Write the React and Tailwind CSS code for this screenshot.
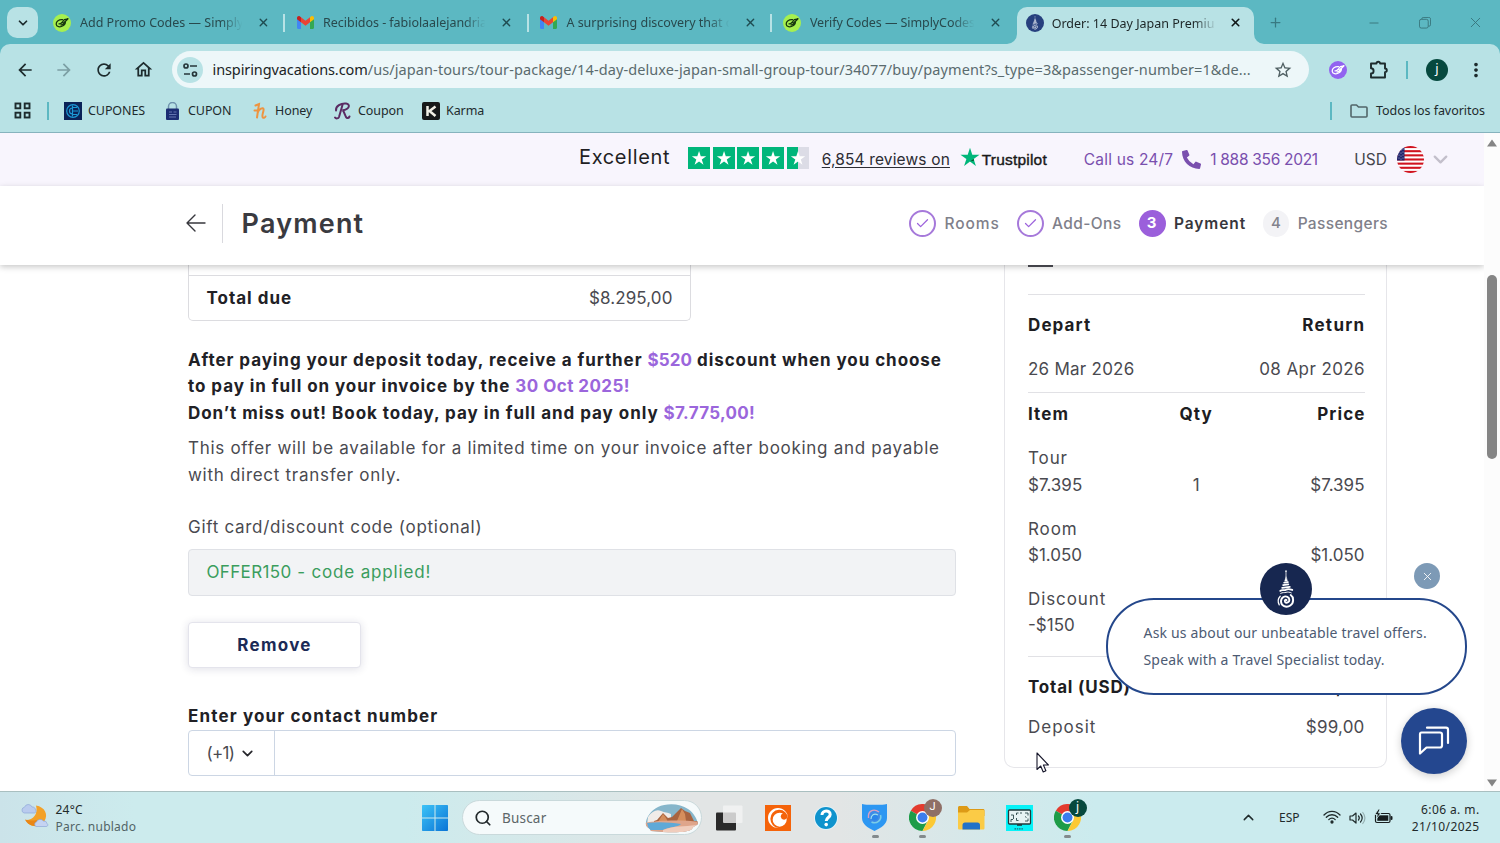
import React from 'react';
import { Check, ChevronDown, ChevronUp, Minus, Plus, Search, X } from 'lucide-react';
import {
  MdArrowBack,
  MdArrowForward,
  MdMoreVert,
  MdOutlineHome,
  MdRefresh,
  MdStarBorder,
} from 'react-icons/md';
import { FaPhoneAlt } from 'react-icons/fa';
import { SiCrunchyroll } from 'react-icons/si';

const STAR = 'M12 2l2.4 7.3H22l-6.2 4.5 2.4 7.3L12 16.6l-6.2 4.5 2.4-7.3L2 9.3h7.6z';

/* ---------- Favicons and logos ---------- */

const SimplyIcon = ({ bg, fg }) => (
  <svg width="18" height="18" viewBox="0 0 18 18" className="shrink-0">
    <circle cx="9" cy="9" r="9" fill={bg} />
    <g fill="none" stroke={fg} strokeWidth="1.3" strokeLinecap="round" strokeLinejoin="round">
      <path d="M9.500 5.600C6 5.200 3 7.600 3.200 10.200c.2 2.600 4 3.400 6.800 1.600 2-1.300 2.600-3 2.200-4.300" />
      <path d="M6 9.800c1.600.2 2.600-.6 3.200-1.600l1.300 1.100 4.500-4.500-3.700.9-1.600 2" />
      <path d="M8 11c1.500 0 2.600-.6 3.300-1.700" />
    </g>
  </svg>
);

const GmailIcon = () => (
  <svg width="17" height="13" viewBox="0 0 17 13" className="shrink-0">
    <path d="M0 2.500v9.300C0 12.500.5 13 1.200 13H4V6z" fill="#4285f4" />
    <path d="M17 2.500v9.300c0 .7-.5 1.200-1.200 1.200H13V6z" fill="#34a853" />
    <path d="M13 1.300v5L17 3.200V2c0-1.700-1.800-2.500-3-1.500z" fill="#fbbc04" />
    <path d="M4 6.200V1.300l4.500 3.500L13 1.300v4.900L8.500 9.700z" fill="#ea4335" />
    <path d="M0 2v1.200l4 3.100V1.300L3 .5C1.800-.5 0 .3 0 2z" fill="#c5221f" />
  </svg>
);

const TempleIcon = ({ size, bg }) => (
  <svg width={size} height={size} viewBox="0 0 54 54" className="shrink-0">
    <circle cx="27" cy="27" r="27" fill={bg} />
    <g fill="none" stroke="#fff" strokeLinecap="round">
      <path d="M27 8v10" strokeWidth=".8" />
      <circle cx="27" cy="8.500" r=".8" fill="#fff" stroke="none" />
      <path d="M27 14.500l-1.500 4.500h3z" fill="#fff" strokeWidth=".4" />
      <path d="M25 20.500l4-.6M24 23l5.500-.8M23 25.800l8-1" strokeWidth="1.700" />
      <path d="M21 29c2-2 4 0 6-1.300s4-.7 6.500.3" strokeWidth="1.900" />
      <path d="M21.500 31.500c2-1.200 4-.5 5.500-1s4-.3 5.500.500" strokeWidth="1" />
      <path d="M27.500 38.500c-1-.8-2.300.6-1.500 1.800 1.400 1.900 4.500.6 4.500-2 0-3-3.600-4.600-6.200-3-3.600 2.300-3.200 7.800.7 9.500 4.600 1.900 9.400-1.600 9.400-6.500 0-2.300-1-4-2.500-5" strokeWidth="2" />
      <path d="M20 43.500c-1.600-3-1.400-6.500 1-9" strokeWidth="1.300" />
    </g>
  </svg>
);

const ChromeLogo = () => (
  <svg width="27" height="27" viewBox="0 0 48 48" className="shrink-0">
    <path d="M24 24L3.200 12A24 24 0 0 1 44.800 12z" fill="#e33b2e" />
    <path d="M24 24L3.200 12A24 24 0 0 0 24 48l9-18z" fill="#1e9c48" />
    <path d="M24 24l20.800-12A24 24 0 0 1 24 48l9.500-18z" fill="#fcc934" />
    <path d="M24 12h20.800L34 20z" fill="#e33b2e" />
    <circle cx="24" cy="24" r="11.500" fill="#fff" />
    <circle cx="24" cy="24" r="8.800" fill="#3b7ded" />
  </svg>
);

const FlagUS = () => (
  <svg width="27" height="27" viewBox="0 0 27 27" className="shrink-0">
    <defs>
      <clipPath id="flag"><circle cx="13.500" cy="13.500" r="13.500" /></clipPath>
    </defs>
    <g clipPath="url(#flag)">
      <rect width="27" height="27" fill="#fff" />
      {[0, 4.15, 8.3, 12.45, 16.6, 20.75, 24.9].map((y) => (
        <rect key={y} y={y} width="27" height="2.080" fill="#d0131f" />
      ))}
      <rect width="7.500" height="14.500" fill="#22256c" />
      <g fill="#c9cbe4">
        {[3, 6, 9, 12].map((y) => (
          <g key={y}>
            <circle cx="2" cy={y} r=".5" />
            <circle cx="4" cy={y + 1} r=".5" />
            <circle cx="6" cy={y} r=".5" />
          </g>
        ))}
      </g>
    </g>
  </svg>
);

/* ---------- Browser chrome ---------- */

const tabs = [
  { title: 'Add Promo Codes — Simply', icon: 'simply', track: 'tracking-[0px]' },
  { title: 'Recibidos - fabiolaalejandria', icon: 'gmail', track: 'tracking-[-0.04px]' },
  { title: 'A surprising discovery that c', icon: 'gmail', track: 'tracking-[0px]' },
  { title: 'Verify Codes — SimplyCodes', icon: 'simply', track: 'tracking-[-0.08px]' },
];

const TabStrip = () => (
  <div className="flex h-11 items-center bg-[#5cb8c2] pl-[7px] pt-px">
    <button aria-label="Search tabs" className="flex h-[31px] w-[31px] items-center justify-center rounded-[10px] bg-[#b8e2e5]">
      <ChevronDown size={14} strokeWidth={3} className="text-[#1c2b2d]" />
    </button>
    <div className="ml-1 flex h-full items-center">
      {tabs.map((t, i) => (
        <div key={t.title} className="flex h-full w-[243.3px] items-center pl-[11px]">
          <div className="flex w-[18px] justify-center">
            {t.icon === 'simply' ? <SimplyIcon bg="#a6f04f" fg="#16350f" /> : <GmailIcon />}
          </div>
          <span className={`ml-[9px] w-[166px] overflow-hidden whitespace-nowrap pt-[2px] text-[12.5px] text-[#28494d] [mask-image:linear-gradient(to_right,black_86%,transparent_99%)] ${t.track}`}>{t.title}</span>
          <X size={13} strokeWidth={2.6} className="ml-[13px] text-[#1f4c51]" />
          {i < 3 && <div className="ml-[13.500px] h-[18px] w-[2px] bg-[#b8e2e5]" />}
        </div>
      ))}
      <div className="relative ml-[1.500px] flex h-[37px] w-[237px] items-center self-end rounded-t-[10px] bg-[#b8e2e5] pb-[6px] pl-[9px]">
        <svg width="10" height="10" className="absolute -left-[10px] bottom-0" viewBox="0 0 10 10"><path d="M10 0v10H0A10 10 0 0 0 10 0z" fill="#b8e2e5" /></svg>
        <svg width="10" height="10" className="absolute -right-[10px] bottom-0" viewBox="0 0 10 10"><path d="M0 0v10h10A10 10 0 0 1 0 0z" fill="#b8e2e5" /></svg>
        <TempleIcon size={18} bg="#27407e" />
        <span className="ml-[8px] w-[165px] overflow-hidden whitespace-nowrap pt-[3px] text-[12.5px] tracking-[0px] text-[#1c2526] [mask-image:linear-gradient(to_right,black_86%,transparent)]">Order: 14 Day Japan Premiu</span>
        <X size={13} strokeWidth={3} className="ml-[12.500px] text-[#101718]" />
      </div>
    </div>
    <Plus size={15} strokeWidth={2} className="ml-[14px] text-[#387a82]" />
    <Minus size={14} strokeWidth={1.6} className="ml-[84px] text-[#38757c]" />
    <svg width="12" height="12" viewBox="0 0 13 13" className="ml-[38px] text-[#38757c]" fill="none" stroke="currentColor" strokeWidth="1">
      <rect x=".5" y="2.500" width="9.500" height="9.500" rx="2" />
      <path d="M3 2.500V2c0-.8.7-1.500 1.500-1.500H10A2 2 0 0 1 12.500 3v5.500c0 .8-.7 1.500-1.500 1.500h-.8" />
    </svg>
    <X size={17} strokeWidth={1.3} className="ml-[36px] text-[#38757c]" />
  </div>
);

const Toolbar = () => (
  <div className="bg-[#5cb8c2]">
    <div className="flex h-[51px] items-center rounded-t-[10px] bg-[#b8e2e5] pl-[15px]">
      <MdArrowBack size={20} className="text-[#1d2b2d]" />
      <MdArrowForward size={20} className="ml-[19px] text-[#7c9fa4]" />
      <MdRefresh size={20} className="ml-[20px] text-[#1d2b2d]" />
      <MdOutlineHome size={21} className="ml-[19px] text-[#1d2b2d]" />
      <div className="ml-[18px] flex h-[37px] w-[1137px] items-center rounded-full bg-[#edf7f9] pl-[5px]">
        <div className="flex h-[26px] w-[26px] items-center justify-center rounded-full bg-[#b8e2e5]">
          <svg width="15" height="14" viewBox="0 0 15 14" fill="none" stroke="#26363a" strokeWidth="1.700">
            <circle cx="3" cy="3" r="2" />
            <path d="M7 3h7M1 11h6" />
            <circle cx="11.500" cy="11" r="2" />
          </svg>
        </div>
        <p className="ml-[9.500px] w-[1046px] whitespace-nowrap text-[14.5px] tracking-[0.1px] text-[#5a6b6e]">
          <span className="tracking-[-0.1px] text-[#1b2425]">inspiringvacations.com</span>/us/japan-tours/tour-package/14-day-deluxe-japan-small-group-tour/34077/buy/payment?s_type=3&amp;passenger-number=1&amp;de...
        </p>
        <MdStarBorder size={20} className="ml-[14.500px] text-[#4f5f62]" />
      </div>
      <div className="ml-5"><SimplyIcon bg="#9263f0" fg="#fff" /></div>
      <svg width="20" height="20" viewBox="0 0 20 20" className="ml-[22px]" fill="none" stroke="#1d2b2d" strokeWidth="1.900" strokeLinejoin="round">
        <path d="M2 3.500h5.500a1.800 1.800 0 0 1 3.600 0H16v5a1.800 1.800 0 0 1 0 3.600v5.400H2v-4a2.500 2.500 0 0 0 0-5.200z" />
      </svg>
      <div className="ml-[17px] h-[18px] w-[2px] bg-[#5cb8c2]" />
      <div className="ml-[18px] flex h-[22px] w-[22px] items-center justify-center rounded-full bg-[#06493f] pb-px text-[13px] text-white">j</div>
      <MdMoreVert size={22} className="ml-[17px] text-[#1d2b2d]" />
    </div>
  </div>
);

const BookmarksBar = () => (
  <div className="flex h-[38px] items-center border-b border-[#86b3bd] bg-[#b8e2e5] pb-[6px] pl-[14px] text-[12.5px] tracking-[-0.08px] text-[#1e2b2d]">
    <svg width="17" height="17" viewBox="0 0 17 17" fill="none" stroke="#1d2b2d" strokeWidth="1.900">
      <rect x="1.500" y="1.500" width="4.800" height="4.800" />
      <rect x="10.700" y="1.500" width="4.800" height="4.800" />
      <rect x="1.500" y="10.700" width="4.800" height="4.800" />
      <rect x="10.700" y="10.700" width="4.800" height="4.800" />
    </svg>
    <div className="ml-[16px] h-[18px] w-[2px] bg-[#5cb8c2]" />
    <svg width="18" height="18" viewBox="0 0 18 18" className="ml-[15px]">
      <rect width="18" height="18" fill="#0b2358" />
      <g fill="none" stroke="#1d9ad6" strokeWidth="1.200">
        <circle cx="9" cy="9" r="6.300" />
        <path d="M8.500 3.500v11M8.500 5.500H13M8.500 9H14M8.500 12.500H13M8.500 6C4.500 6 4.500 12 8.500 12" />
      </g>
    </svg>
    <span className="ml-[6px] w-[78px] whitespace-nowrap pt-px">CUPONES</span>
    <svg width="13" height="18" viewBox="0 0 13 18">
      <path d="M2.500 8V4.500a4 4 0 0 1 8 0V8" fill="none" stroke="#6f93ad" strokeWidth="1.500" />
      <rect y="6.500" width="13" height="11.500" rx="1" fill="#1c2d73" />
      <path d="M3 10h3M7.500 10h3M3 12.500h7.500M3 15h7" stroke="#6d7fb8" strokeWidth=".9" />
    </svg>
    <span className="ml-[9px] w-[64.500px] whitespace-nowrap pt-px">CUPON</span>
    <svg width="15" height="18" viewBox="0 0 15 18" fill="none" stroke="#ee9440" strokeWidth="2" strokeLinecap="round">
      <path d="M2.500 3.500l3.500-1.500L4 15.500M1.500 8.500h3.500M4.600 11c1-4 6-6.500 6-3.500 0 2.500-2.200 6.500-.8 8 1 .8 2.300 0 2.700-1" />
    </svg>
    <span className="ml-[7.500px] w-[58px] whitespace-nowrap pt-px">Honey</span>
    <svg width="19" height="18" viewBox="0 0 19 18" fill="none" stroke="#5a2c63" strokeWidth="2" strokeLinecap="round">
      <path d="M9.500 3L6 15c-.5 1.500-3 2-4 .5M3 8.500C2.500 4 8 1 13 1.500c4.500.5 4 6-3.500 6.800C11.500 9 12 15.500 14 16c1 .2 2-.3 2.500-1.500" />
    </svg>
    <span className="ml-[6px] w-[64px] whitespace-nowrap pt-px">Coupon</span>
    <svg width="18" height="18" viewBox="0 0 18 18">
      <rect width="18" height="18" rx="2" fill="#17191a" />
      <path d="M5.500 4v10M13.500 4.500L7.500 9l6 5" fill="none" stroke="#f1efe6" strokeWidth="2.500" />
    </svg>
    <span className="ml-[6px] whitespace-nowrap pt-px">Karma</span>
    <div className="ml-auto h-[18px] w-[2px] bg-[#5cb8c2]" />
    <svg width="18" height="14" viewBox="0 0 18 14" className="ml-[18px]" fill="none" stroke="#526669" strokeWidth="1.600" strokeLinejoin="round">
      <path d="M1 12V2c0-.6.400-1 1-1h4.500l2 2H16c.6 0 1 .4 1 1v8c0 .6-.4 1-1 1H2c-.6 0-1-.4-1-1z" />
    </svg>
    <span className="ml-[8px] mr-[15px] w-[109px] whitespace-nowrap pt-px tracking-[-0.05px]">Todos los favoritos</span>
  </div>
);

/* ---------- Page ---------- */

const TrustBanner = () => (
  <div className="flex h-[53px] items-center bg-[#f8f5fd] pl-[579px]">
    <span className="w-[109px] whitespace-nowrap pb-[5px] text-[20px] tracking-[0.65px] text-[#1f1f24]">Excellent</span>
    <div className="flex gap-[2.700px] pb-[4px]">
      {[100, 100, 100, 100, 50].map((fill, i) => (
        <svg key={i} width="22" height="22" viewBox="0 0 22 22">
          <rect width="22" height="22" fill="#dcdce6" />
          <rect width={fill === 50 ? 11 : 22} height="22" fill="#00b67a" />
          <path d={STAR} fill="#fff" transform="translate(2.400 2.500) scale(.72)" />
        </svg>
      ))}
    </div>
    <span className="ml-[13px] w-[138px] whitespace-nowrap text-[15.5px] tracking-[0.15px] text-[#2c2c33] underline underline-offset-[2px]">6,854 reviews on</span>
    <svg width="20" height="20" viewBox="1.500 1.500 21 20.500" className="mb-[5px]">
      <path d={STAR} fill="#00b67a" />
      <path d="M15.800 13.800l.6 1.700-4.400 1.100z" fill="#005128" />
    </svg>
    <span className="ml-[2px] w-[102px] whitespace-nowrap font-[Liberation_Sans] text-[15.500px] tracking-[0.2px] text-[#191919] [-webkit-text-stroke:0.4px_#191919]">Trustpilot</span>
    <span className="w-[98px] whitespace-nowrap text-[15.5px] tracking-[0.2px] text-[#7a4fae]">Call us 24/7</span>
    <FaPhoneAlt size={19} className="text-[#7a4fae]" />
    <span className="ml-[9.500px] w-[144px] whitespace-nowrap text-[15.5px] tracking-[-0.3px] text-[#7a4fae]">1 888 356 2021</span>
    <span className="w-[43px] text-[15.5px] text-[#44444c]">USD</span>
    <FlagUS />
    <ChevronDown size={23} strokeWidth={2.4} className="ml-[5px] text-[#c3bfcb]" />
  </div>
);

const Step = ({ state, num, label, className }) => (
  <div className={`flex items-center ${className}`}>
    {state === 'done' && (
      <span className="flex h-[27px] w-[27px] items-center justify-center rounded-full border-2 border-[#a679da]">
        <Check size={15} strokeWidth={2} className="text-[#9d63dc]" />
      </span>
    )}
    {state === 'current' && (
      <span className="flex h-[27px] w-[27px] items-center justify-center rounded-full bg-[#9b5fdb] pt-px text-[15px] font-bold text-white">{num}</span>
    )}
    {state === 'next' && (
      <span className="flex h-[27px] w-[27px] items-center justify-center rounded-full bg-[#f3f3f6] pt-px text-[15px] font-medium text-[#83838c]">{num}</span>
    )}
    <span className={`ml-[8.500px] whitespace-nowrap pt-[2px] text-[15.5px] ${state === 'current' ? 'font-semibold text-[#37373d]' : 'font-medium text-[#80808a]'}`}>{label}</span>
  </div>
);

const PageHeader = () => (
  <div className="relative z-10 flex h-[79px] items-center bg-white pb-[4px] pl-[186px] shadow-[0_2px_6px_rgba(0,0,0,0.22)]">
    <svg width="20" height="18" viewBox="0 0 20 18" className="mb-px" fill="none" stroke="#37373d" strokeWidth="1.400" strokeLinecap="round" strokeLinejoin="round">
      <path d="M9 1L1 9l8 8M1 9h18" />
    </svg>
    <div className="ml-[16px] h-[39px] w-px bg-[#d9d9de]" />
    <h1 className="ml-[18.500px] whitespace-nowrap pt-[2px] text-[27px] font-semibold tracking-[1.2px] text-[#3a3a40]">Payment</h1>
    <div className="ml-auto mr-[96px] flex pb-px">
      <Step state="done" label="Rooms" className="w-[107.500px] tracking-[0.9px]" />
      <Step state="done" label="Add-Ons" className="w-[122px] tracking-[0.4px]" />
      <Step state="current" num="3" label="Payment" className="w-[124.500px] tracking-[0.9px]" />
      <Step state="next" num="4" label="Passengers" className="w-[125px] tracking-[0.35px]" />
    </div>
  </div>
);

const PaymentForm = () => (
  <div className="w-[768px] text-[17px] leading-[26.4px] tracking-[0.71px] text-[#4a4a50]">
    <div className="h-[56px] w-[503px] rounded-b-[5px] border border-t-0 border-[#dcdce0] pt-[10px]">
      <div className="flex h-[45px] items-center justify-between border-t border-[#dcdce0] px-[17.500px]">
        <span className="font-bold tracking-[1px] text-[#212126]">Total due</span>
        <span className="tracking-[0.1px]">$8.295,00</span>
      </div>
    </div>
    <p className="mt-[26px] whitespace-nowrap font-bold text-[#212126]">
      <span className="tracking-[0.93px]">After paying your deposit today, receive a further <span className="tracking-[0.1px] text-[#9b66dc]">$520</span> discount when you choose</span><br />
      <span className="tracking-[0.94px]">to pay in full on your invoice by the <span className="tracking-[0.45px] text-[#9b66dc]">30 Oct 2025!</span></span><br />
      <span className="tracking-[0.96px]">Don’t miss out! Book today, pay in full and pay only <span className="tracking-[0.3px] text-[#9b66dc]">$7.775,00!</span></span>
    </p>
    <p className="mt-[9px] whitespace-nowrap">
      This offer will be available for a limited time on your invoice after booking and payable<br />
      with direct transfer only.
    </p>
    <label className="mt-[26px] block">Gift card/discount code (optional)</label>
    <div className="mt-[9px] flex h-[47px] items-center rounded-[4px] border border-[#dfe1e6] bg-[#f2f3f5] px-[17.500px] pb-px text-[#3a9d5d]"><span className="tracking-[0.35px]">OFFER150</span><span className="whitespace-pre tracking-[0.85px]"> - code applied!</span></div>
    <button className="mt-[26px] h-[46px] w-[173px] rounded-[4px] border border-[#e4e4ec] bg-white font-bold tracking-[1.3px] text-[#1b2a56] shadow-[0_1px_8px_rgba(30,30,80,0.14)]">Remove</button>
    <label className="mt-[35px] block font-bold tracking-[1.14px] text-[#212126]">Enter your contact number</label>
    <div className="flex h-[46px] rounded-[4px] border border-[#ccd6e4]">
      <div className="flex w-[86px] items-center border-r border-[#ccd6e4] pl-[17.500px] tracking-[-0.7px]">
        (+1)
        <ChevronDown size={17} strokeWidth={2.4} className="ml-[5px] mt-[2px] text-[#26262b]" />
      </div>
    </div>
  </div>
);

const items = [
  { name: 'Tour', unit: '$7.395', qty: '1', price: '$7.395' },
  { name: 'Room', unit: '$1.050', qty: '', price: '$1.050' },
  { name: 'Discount', unit: '-$150', qty: '', price: '' },
];

const OrderSummary = () => (
  <aside className="ml-[48px] h-[503px] w-[383px] rounded-b-[10px] border border-t-0 border-[#e6e6ea] pl-[23px] pr-[21.500px] text-[17px] leading-[26.4px] text-[#4a4a50]">
    <div className="h-[2px] w-[25px] bg-[#4d4d55]" />
    <div className="mt-[27px] border-t border-[#e1e1e5]" />
    <div className="mt-[17px] flex justify-between font-bold tracking-[1.1px] text-[#1d1d22]">
      <span>Depart</span>
      <span className="-mr-px tracking-[1.3px]">Return</span>
    </div>
    <div className="mt-[17.500px] flex justify-between">
      <span className="tracking-[0.25px]">26 Mar 2026</span>
      <span className="-mr-[0.500px] tracking-[0.4px]">08 Apr 2026</span>
    </div>
    <div className="mt-[9.500px] border-t border-[#e1e1e5]" />
    <div className="mt-[8.500px] grid grid-cols-3 font-bold tracking-[1.1px] text-[#1d1d22]">
      <span>Item</span>
      <span className="text-center">Qty</span>
      <span className="-mr-px text-right">Price</span>
    </div>
    {items.map((it) => (
      <div key={it.name} className="mt-[17.500px] grid grid-cols-3 items-end">
        <span><span className="tracking-[0.9px]">{it.name}</span><br />{it.unit}</span>
        <span className="text-center">{it.qty}</span>
        <span className="text-right">{it.price}</span>
      </div>
    ))}
    <div className="mt-[17.500px] border-t border-[#e1e1e5]" />
    <div className="mt-[17px] flex justify-between font-bold tracking-[0.8px] text-[#1d1d22]">
      <span>Total (USD)</span>
      <span className="tracking-[0.1px]">$8.295,00</span>
    </div>
    <div className="mt-[13px] flex justify-between">
      <span className="tracking-[1px]">Deposit</span>
      <span className="tracking-[0.2px]">$99,00</span>
    </div>
  </aside>
);

const ChatWidget = () => (
  <>
    <div className="absolute left-[1106px] top-[465px] z-20 flex h-[97px] w-[361px] flex-col justify-center rounded-[48px] border-[2.500px] border-[#24478b] bg-white pl-[35.500px] text-[14px] leading-[26.500px] tracking-[0.18px] text-[#4d5b73]">
      <p className="whitespace-nowrap">Ask us about our unbeatable travel offers.</p>
      <p className="whitespace-nowrap">Speak with a Travel Specialist today.</p>
    </div>
    <div className="absolute left-[1260px] top-[430px] z-20"><TempleIcon size={52} bg="#172750" /></div>
    <button aria-label="Close" className="absolute left-[1414px] top-[430px] z-20 flex h-[26px] w-[26px] items-center justify-center rounded-full bg-[#7d9ab6]">
      <X size={13} strokeWidth={1.6} className="text-white" />
    </button>
    <button aria-label="Chat" className="absolute left-[1400.500px] top-[574.500px] z-20 flex h-[66px] w-[66px] items-center justify-center rounded-full bg-[#24478f] shadow-[0_2px_8px_rgba(0,0,0,0.2)]">
      <svg width="33" height="32" viewBox="0 0 33 32" fill="none" stroke="#fff" strokeWidth="2.200" strokeLinejoin="round">
        <path d="M4.500 7.500H23c1.200 0 2 .8 2 2v11c0 1.200-.8 2-2 2H9.500L3 28.500V9.500c0-1.200.5-2 1.500-2z" />
        <path d="M10 2.700h19c1.200 0 2 .8 2 2V18" strokeLinecap="round" />
      </svg>
    </button>
  </>
);

const Scrollbar = () => (
  <div className="flex w-4 flex-col items-center bg-[#fcfcfc]">
    <svg width="10" height="8" viewBox="0 0 10 8" className="mt-[6px]"><path d="M5 0.500L10 7.500H0z" fill="#858585" /></svg>
    <div className="mt-[128px] h-[184px] w-[10px] rounded-full bg-[#858585]" />
    <svg width="10" height="8" viewBox="0 0 10 8" className="mb-[4px] mt-auto"><path d="M5 7.500L10 .5H0z" fill="#858585" /></svg>
  </div>
);

/* ---------- Taskbar ---------- */

const RunningApp = ({ children, className }) => (
  <div className={`relative flex h-full items-center ${className}`}>
    {children}
    <span className="absolute bottom-[5px] left-[9.500px] h-[3px] w-[7px] rounded-full bg-[#838a8c]" />
  </div>
);

const Taskbar = () => (
  <div className="flex h-[52px] items-center border-t border-[#a9bfc0] bg-[linear-gradient(to_right,#cbe3e9_0%,#ccebed_9%,#ccebed_27%,#e2e5e5_46%,#e2e5e5_56%,#cbebee_73%,#cbebee_100%)] text-[#1f2a2b]">
    <svg width="28" height="26" viewBox="0 0 28 26" className="ml-[21px] mb-[3px]">
      <path d="M15 2.500c9 1.500 12.500 9 8.500 15.500-4.500 7-15 7-19-1 7 .5 13-5.500 10.500-14.500z" fill="#f3a128" />
      <path d="M4 16.500c3 6 9 7.500 14.500 5.500l-3-5c-4 1-7 .5-11.500-.5z" fill="#e98718" />
      <path d="M3 10a3 3 0 0 1 .5-5.800A4 4 0 0 1 11 4a3 3 0 0 1 3.500 3 1.800 1.800 0 0 1-1 3z" fill="#b9cbee" stroke="#8ea7d8" strokeWidth=".7" />
      <path d="M15 23.500a2.500 2.500 0 0 1 .5-4.600 4 4 0 0 1 7-.8 3 3 0 0 1 3.500 2.400c1.400.8 1 3-.8 3z" fill="#c5d3f2" stroke="#8ea7d8" strokeWidth=".7" />
    </svg>
    <div className="ml-[6.500px] w-[366.500px] pt-px text-[12px] leading-[17.500px] tracking-[0.25px]">
      <p>24°C</p>
      <p className="text-[#526466]">Parc. nublado</p>
    </div>
    <svg width="26" height="26" viewBox="0 0 26 26">
      <defs>
        <linearGradient id="win" x1="0" y1="0" x2="1" y2="1" gradientUnits="objectBoundingBox">
          <stop offset="0" stopColor="#3cc3f7" />
          <stop offset="1" stopColor="#0a74d6" />
        </linearGradient>
      </defs>
      <path d="M0 1c0-.6.400-1 1-1h11.500v12.500H0zM13.500 0H25c.6 0 1 .4 1 1v11.500H13.500zM0 13.500h12.500V26H1c-.6 0-1-.4-1-1zM13.500 13.500H26V25c0 .6-.4 1-1 1H13.500z" fill="url(#win)" />
    </svg>
    <div className="ml-[14px] flex h-[35px] w-[240px] items-center rounded-full border border-[#c9d9db] bg-[#f5fafb] pl-[10.500px]">
      <Search size={18} strokeWidth={2.3} className="text-[#22292b]" />
      <span className="ml-[10.500px] w-[143px] pt-px text-[13.500px] tracking-[0.2px] text-[#5c6668]">Buscar</span>
      <svg width="54" height="30" viewBox="0 0 54 30">
        <defs>
          <clipPath id="scene"><path d="M1 22C0 16 5 8 13 4c8-4 22-4 30 2 6 4 9 10 10 15-2 2-5 2-6 5-4 4-22 4-41 2-1-3-5-4-5-6z" /></clipPath>
        </defs>
        <g clipPath="url(#scene)">
          <rect width="54" height="30" fill="#86b6cb" />
          <path d="M3 14c4-6 9-8 13-6s6 1 10 3v11H2z" fill="#f1ece8" />
          <path d="M9 18l3-1 6-7 5 5 4-1 9-9 4 3 5 2 4 8h6v3H9z" fill="#a86440" />
          <path d="M13 19l5-8 3 4 2 4zM32 18l5-12 3 5 1 7z" fill="#d58e5c" />
          <path d="M0 20c14-3 40-3 54-1v11H0z" fill="#dfa58b" />
          <path d="M2 20c12-1.500 24-.5 34 1-2 3-12 3-18 6H4z" fill="#5fa9d8" />
          <path d="M18 27c12-5 20-3 34-5v8H18z" fill="#f0cdbd" />
        </g>
      </svg>
    </div>
    <svg width="27" height="26" viewBox="0 0 27 26" className="ml-[14px]">
      <rect y="7.500" width="20" height="18" rx="1" fill="#2a2a2a" />
      <rect x="7" y=".5" width="19.500" height="17.500" rx="1" fill="#f4f4f4" fillOpacity=".8" />
    </svg>
    <div className="ml-[22px] flex h-[26px] w-[26px] items-center justify-center bg-[#f5630a]">
      <SiCrunchyroll size={20} className="text-white" />
    </div>
    <svg width="24" height="24" viewBox="0 0 24 24" className="ml-[23px]">
      <circle cx="12" cy="12" r="12" fill="#e5f3f8" />
      <circle cx="12" cy="12" r="11" fill="#0f93cd" />
      <path d="M8 9c0-5.300 8.200-5.300 8.200-.5 0 3-4 3.100-4 6.500" fill="none" stroke="#fff" strokeWidth="3" />
      <circle cx="12.200" cy="18.600" r="1.800" fill="#fff" />
    </svg>
    <RunningApp className="ml-[24px]">
      <svg width="25" height="27" viewBox="0 0 25 27">
        <path d="M0 0c5 1 8 .8 12.500.8S20 1 25 0v14c0 6-6 10-12.500 13C6 24 0 20 0 14z" fill="#2d97f2" />
        <circle cx="12.500" cy="13" r="5" fill="#2a86ea" stroke="#3f8be6" strokeWidth="3" />
        <path d="M6.500 14c-1-7 5-10 10.500-6" fill="none" stroke="#dc9fc0" strokeWidth="1.400" />
        <path d="M18.500 11c1.500 5-4 9.500-9 7" fill="none" stroke="#79cde8" strokeWidth="1.600" />
        <path d="M9 15c0-4 3-6 7-4" fill="none" stroke="#9fe0ee" strokeWidth="1.200" />
      </svg>
    </RunningApp>
    <RunningApp className="ml-[22px] w-[27px]">
      <ChromeLogo />
      <span className="absolute left-[14.500px] top-[6.500px] flex h-[18px] w-[18px] items-center justify-center rounded-full bg-[#8f6f66] font-[Roboto] text-[11px] text-white">J</span>
    </RunningApp>
    <svg width="27" height="24" viewBox="0 0 27 24" className="ml-[21.500px]">
      <path d="M0 1.500C0 .7.700 0 1.500 0H9l2.500 3H25c1 0 1.500.5 1.500 1.500V10H0z" fill="#dd9a16" />
      <path d="M0 6.500h9L12 4h13c1 0 1.500.6 1.500 1.500V22c0 1-.6 1.500-1.500 1.500H1.500C.6 23.500 0 23 0 22z" fill="#fbcb46" />
      <path d="M4.500 23.500V19c0-1.500 1-2.500 2.500-2.500h12.500c1.500 0 2.500 1 2.500 2.500v4.500z" fill="#2272c8" />
    </svg>
    <svg width="27" height="26" viewBox="0 0 27 26" className="ml-[21px]">
      <rect width="27" height="26" fill="#06f2f7" />
      <rect x="2.500" y="5" width="22" height="14" rx="1" fill="#e6f3f3" stroke="#20383b" strokeWidth="1.300" />
      <path d="M5 10h2.500v4M5 17v-2.500h2M10.500 10V8h2M16 8h-2M10.500 13v2.500h2M19 8h3v2.500M19 16h3v-2.500M19 11.500l1.500 1" fill="none" stroke="#2b474a" strokeWidth=".9" />
      <path d="M11 19h5v1.800h-5z" fill="#20383b" />
      <path d="M8.500 23.800h9" stroke="#1b6a78" strokeWidth="1.200" strokeDasharray="1.500 .8" />
    </svg>
    <RunningApp className="ml-[21.500px] w-[27px]">
      <ChromeLogo />
      <span className="absolute left-[14.500px] top-[6.500px] flex h-[18px] w-[18px] items-center justify-center rounded-full bg-[#07493e] pb-px text-[12px] text-white">j</span>
    </RunningApp>
    <ChevronUp size={17} strokeWidth={2} className="ml-auto" />
    <span className="ml-[22.500px] w-[43.500px] pt-px text-[12px] tracking-[0px]">ESP</span>
    <svg width="18" height="14" viewBox="0 0 18 14" className="mb-px" fill="none" stroke="#1f2a2b" strokeWidth="1.300" strokeLinecap="round">
      <path d="M1 5c4.500-4.800 11.500-4.800 16 0M3.300 7.300c3.200-3.400 8.200-3.400 11.400 0M5.800 9.600c1.800-1.900 4.600-1.900 6.400 0" />
      <circle cx="9" cy="12" r="1" fill="#1f2a2b" />
    </svg>
    <svg width="17" height="14" viewBox="0 0 17 14" className="ml-[8px]" fill="none" stroke="#1f2a2b" strokeWidth="1.200" strokeLinecap="round" strokeLinejoin="round">
      <path d="M1 5v4h2.500L7 12V2L3.500 5zM9.500 5c1 1.200 1 2.800 0 4M11.500 3c2 2.400 2 5.600 0 8" />
      <path d="M13.800 1.500c2.600 3.400 2.600 7.600 0 11" opacity=".3" />
    </svg>
    <svg width="19" height="15" viewBox="0 0 19 15" className="mb-[2px] ml-[8px]">
      <rect x="1.500" y="4.500" width="14.500" height="9" rx="1.500" fill="none" stroke="#161d1e" strokeWidth="1.200" />
      <rect x="3.300" y="6.300" width="11" height="5.500" fill="#161d1e" />
      <rect x="16.500" y="7" width="2" height="4" rx="1" fill="#161d1e" />
      <path d="M4.500 0L.8 5.500h2.500L2.300 10 7 4H4.500L6 0z" fill="#161d1e" stroke="#cbebee" strokeWidth=".8" />
    </svg>
    <div className="ml-[17px] mr-[20.500px] w-[70px] whitespace-nowrap pt-px text-right text-[12px] leading-[17.500px] tracking-[0.4px]">
      <p>6:06 a. m.</p>
      <p>21/10/2025</p>
    </div>
  </div>
);

const Cursor = () => (
  <svg width="14" height="22" viewBox="0 0 14 22" className="absolute left-[1036px] top-[619px] z-30">
    <path d="M1 1v16.500l3.700-3.500 2.500 6 2.700-1.200-2.500-5.800h5z" fill="#fff" stroke="#16162a" strokeWidth="1.100" strokeLinejoin="round" />
  </svg>
);

const App = () => {
  return (
    <div className="flex h-[843px] w-[1500px] flex-col overflow-hidden font-['Noto_Sans',sans-serif]">
      <TabStrip />
      <Toolbar />
      <BookmarksBar />
      <div className="relative flex h-[658px] bg-white">
        <div className="w-[1484px] overflow-hidden font-[Inter,sans-serif]">
          <TrustBanner />
          <PageHeader />
          <div className="flex pl-[188px]">
            <PaymentForm />
            <OrderSummary />
          </div>
        </div>
        <Scrollbar />
        <ChatWidget />
        <Cursor />
      </div>
      <Taskbar />
    </div>
  );
};

export default App;
